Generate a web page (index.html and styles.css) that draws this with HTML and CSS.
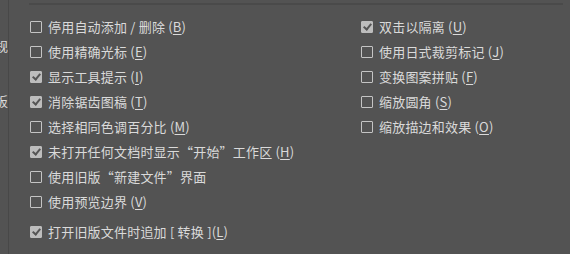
FILE: index.html
```html
<!DOCTYPE html>
<html lang="zh-CN">
<head>
  <meta charset="UTF-8">
  <title>首选项</title>
  <link rel="stylesheet" href="styles.css">
</head>
<body>

<div class="side">
  <div class="side-item s1">常规</div>
  <div class="side-item s2">剪贴板</div>
</div>

<div class="panel">
  <div class="topline"></div>
  <div class="cols">
    <div class="col left">
      <label class="opt"><span class="box"></span><span>停用自动添加 / 删除 (<u>B</u>)</span></label>
      <label class="opt"><span class="box"></span><span>使用精确光标 (<u>E</u>)</span></label>
      <label class="opt"><span class="box on"></span><span>显示工具提示 (<u>I</u>)</span></label>
      <label class="opt"><span class="box on"></span><span>消除锯齿图稿 (<u>T</u>)</span></label>
      <label class="opt"><span class="box"></span><span>选择相同色调百分比 (<u>M</u>)</span></label>
      <label class="opt"><span class="box on"></span><span>未打开任何文档时显示“开始”工作区 (<u>H</u>)</span></label>
      <label class="opt"><span class="box"></span><span>使用旧版“新建文件”界面</span></label>
      <label class="opt"><span class="box"></span><span>使用预览边界 (<u>V</u>)</span></label>
      <label class="opt last"><span class="box on"></span><span>打开旧版文件时追加 [ 转换 ](<u>L</u>)</span></label>
    </div>
    <div class="col right">
      <label class="opt"><span class="box on"></span><span>双击以隔离 (<u>U</u>)</span></label>
      <label class="opt"><span class="box"></span><span>使用日式裁剪标记 (<u>J</u>)</span></label>
      <label class="opt"><span class="box"></span><span>变换图案拼贴 (<u>F</u>)</span></label>
      <label class="opt"><span class="box"></span><span>缩放圆角 (<u>S</u>)</span></label>
      <label class="opt"><span class="box"></span><span>缩放描边和效果 (<u>O</u>)</span></label>
    </div>
  </div>
</div>

</body>
</html>
```

FILE: styles.css
```css
body {
  margin: 0;
  height: 254px;
  overflow: hidden;
  display: flex;
  background: #535353;
  color: #dadada;
  font-family: "Noto Sans CJK SC", "Noto Sans", sans-serif;
  font-size: 13px;
}

.side {
  width: 8px;
  flex-shrink: 0;
  border-right: 1px solid #484848;
  overflow: hidden;
  display: flex;
  flex-direction: column;
  align-items: flex-end;
}

.side-item {
  white-space: nowrap;
  line-height: 14px;
}

.s1 {
  margin-top: 39px;
}

.s2 {
  margin-top: 41px;
}

.panel {
  flex: 1;
}

.topline {
  margin: 3px 7px 0 20px;
  border-top: 2px solid #4a4a4a;
}

.cols {
  display: flex;
  padding: 9px 0 0 21px;
}

.col {
  display: flex;
  flex-direction: column;
}

.left {
  width: 331px;
}

.opt {
  display: flex;
  align-items: center;
  gap: 6px;
  height: 25px;
  white-space: nowrap;
  letter-spacing: 0.2px;
}

.opt.last {
  margin-top: 5px;
}

.opt u {
  text-decoration: underline;
  text-underline-offset: 2px;
}

.box {
  width: 10px;
  height: 10px;
  border: 1px solid #c4c4c4;
  border-radius: 1px;
  flex-shrink: 0;
  position: relative;
}

.box.on {
  background: #bdbdbd;
  border-color: #bdbdbd;
}

.box.on::after {
  content: "";
  position: absolute;
  left: 3px;
  top: 0px;
  width: 3px;
  height: 6px;
  border-right: 2px solid #555;
  border-bottom: 2px solid #555;
  transform: rotate(40deg);
}
```
